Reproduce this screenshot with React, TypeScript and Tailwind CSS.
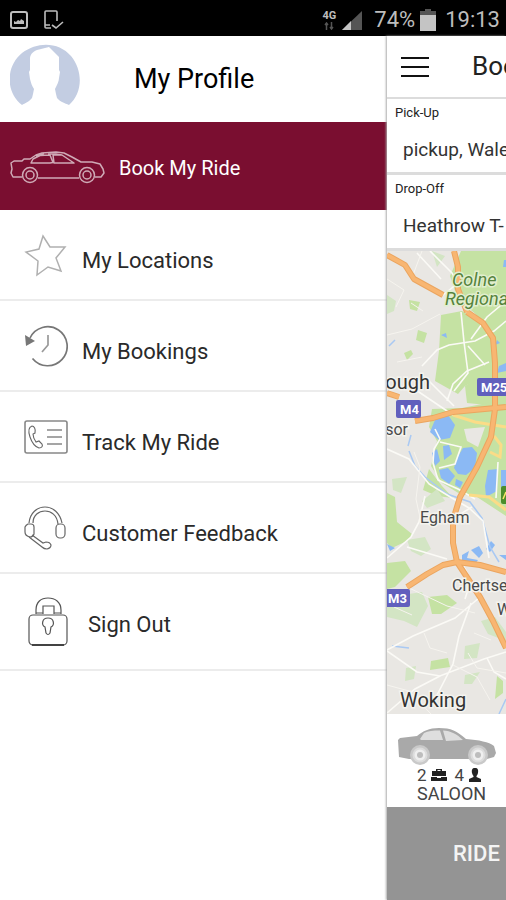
import type { ReactNode } from 'react';

function CarOutlineIcon() {
  return (
    <svg viewBox="0 0 96 34" className="w-24 shrink-0" fill="none" stroke="#cfaab6" strokeWidth="1.5" strokeLinejoin="round" aria-hidden="true">
      <path d="M12 26H3L1 22L2 18L1 12L4 10L12 10L14 8L20 8L26 4L32 2L46 1L54 2L62 6L71 11L82 11L90 13L93 18L94 22L91 26H85M69 27H28" />
      <path d="M21 12L23 8L30 4.500L40 4L43 11.500L40 12ZM43 4L52 4L58 8L64 12H44ZM26 5L34 2.500M52 4L46 3H38" />
      <circle cx="20" cy="24" r="7.500" />
      <circle cx="20" cy="24" r="4" />
      <circle cx="77" cy="24" r="7.500" />
      <circle cx="77" cy="24" r="4" />
    </svg>
  );
}

function SaloonIcon() {
  return (
    <svg viewBox="0 0 100 38" className="w-[100px]" aria-hidden="true">
      <path
        d="M1 13L3 11L20 9C26 4 32 1 42 1C54 1 60 4 69 12C82 13 92 15 97 19L99 26L97 30L90 32H12L2 30Z"
        fill="#a9a9a9"
      />
      <path d="M23 12L27 6C31 4 36 3.500 43 3.500L46 13H24ZM46 3.500C54 4 60 7 66 13L49 14Z" fill="#dedede" />
      {[23, 81].map((cx) => (
        <g key={cx}>
          <circle cx={cx} cy="28" r="10" fill="#c9c9c9" />
          <circle cx={cx} cy="28" r="7.500" fill="#dcdcdc" />
          <circle cx={cx} cy="28" r="5.500" fill="#efefef" />
          <circle cx={cx} cy="28" r="3" fill="#bdbdbd" />
        </g>
      ))}
    </svg>
  );
}

function StarIcon() {
  return (
    <svg viewBox="0 0 44 44" className="w-11" fill="none" stroke="#b0b0b0" strokeWidth="1.5" aria-hidden="true">
      <path d="M19 3L26 14L41 14L32 25L37 38L24 34L13 42L14 28L2 19L15 16Z" />
    </svg>
  );
}

function HistoryIcon() {
  return (
    <svg viewBox="0 0 44 44" className="w-11" fill="none" stroke="#777" strokeWidth="1.7" aria-hidden="true">
      <path d="M6 14A19.500 19.500 0 1 1 8.500 34.500" />
      <path d="M24 11V21L18 28" stroke="#999" />
      <path d="M1 11L11 17L2 22Z" fill="#777" stroke="none" />
    </svg>
  );
}

function ContactCardIcon() {
  return (
    <svg viewBox="0 0 44 44" className="w-11" fill="none" stroke="#888" strokeWidth="1.6" aria-hidden="true">
      <rect x="1" y="6" width="42" height="32" rx="2" />
      <path d="M8 11C5 12 4 16 6 22C8 28 12 32 15 33C18 33 19 31 18 29L15 26L12 27C10 24 9 21 9 19L11 18C12 14 10 11 8 11Z" stroke="#666" strokeWidth="1.1" />
      <path d="M23 15H38M23 22H38M23 29H38" strokeWidth="1.5" />
    </svg>
  );
}

function HeadsetIcon() {
  return (
    <svg viewBox="0 0 44 44" className="w-11" fill="none" stroke="#666" strokeWidth="1.2" aria-hidden="true">
      <path d="M5 17C6 7 13 1 21 1S36 7 38 17M9 17C9 9 15 5 21 5S33 9 34 18" />
      <path d="M4 18H7Q10 18 10 21V28Q9 31 6 31Q1 30 1 26V21Q2 19 4 18Z" />
      <rect x="32" y="18" width="9" height="14" rx="4" />
      <path d="M5 31L18 41Q20 43 23 43Q27 42 27 39Q26 36 22 36L19 37L8 29" />
    </svg>
  );
}

function PadlockIcon() {
  return (
    <svg viewBox="0 0 40 50" className="h-[50px] w-10" fill="none" stroke="#555" strokeWidth="1.2" aria-hidden="true">
      <rect x="1" y="18" width="38" height="30" rx="4" />
      <path d="M8 17V13C8 5 13 1 20 1S33 5 33 13V17M15 17V9H26V17M8 16H15M26 16H33" />
      <path d="M17 30C13 28 14 21 20 21S27 28 23 30L22 36Q20 39 18 36Z" />
      <path d="M4 48H36" stroke="#222" strokeWidth="1.5" />
    </svg>
  );
}

function StatusBar() {
  return (
    <div className="flex h-9 items-center justify-between bg-black pl-[10px] pr-[6px] pt-[3px] text-[#bdbdbd]">
      <div className="flex items-center gap-4">
        <svg viewBox="0 0 18 18" className="w-[18px]" fill="none" stroke="currentColor" strokeWidth="2" aria-hidden="true">
          <rect x="1" y="1" width="16" height="16" rx="2" />
          <path d="M4 13V10L6 11L8 9L10 10L11 8L14 10V13Z" fill="currentColor" stroke="none" />
        </svg>
        <svg viewBox="0 0 20 20" className="w-5" fill="none" stroke="currentColor" strokeWidth="1.6" aria-hidden="true">
          <path d="M13 11V2Q13 1 12 1H2Q1 1 1 2V17Q1 18 2 18H7M1 15H6M8 15L12 18L19 12" />
        </svg>
      </div>
      <div className="flex items-center">
        <div className="flex flex-col items-center">
          <span className="text-[11px] font-bold leading-[12px]">4G</span>
          <svg viewBox="0 0 10 8" className="w-[10px]" fill="none" stroke="#555" strokeWidth="1.5" aria-hidden="true">
            <path d="M2.500 8V1M1 3L2.500 1L4 3M7.500 0V7M6 5L7.500 7L9 5" />
          </svg>
        </div>
        <svg viewBox="0 0 20 20" className="ml-[6px] w-5" aria-hidden="true">
          <path d="M0 20L20 1V20Z" fill="#555" />
          <path d="M0 20L9 11V20Z" fill="#c4c4c4" />
        </svg>
        <span className="ml-3 text-[22px] leading-8">74%</span>
        <svg viewBox="0 0 16 22" className="ml-[5px] w-4" aria-hidden="true">
          <path d="M5 0H11V2H16V7H0V2H5Z" fill="#555" />
          <path d="M0 6H16V22H0Z" fill="#c4c4c4" />
        </svg>
        <span className="ml-[9px] text-[22px] leading-8">19:13</span>
      </div>
    </div>
  );
}

type MenuItemProps = { icon: ReactNode; label: string };

function MenuItem({ icon, label }: MenuItemProps) {
  return (
    <li>
      <button className="flex h-[91px] w-full items-center gap-[14px] border-b-2 border-[#ececec] pl-6 text-left text-[22px] text-[#2a2a2a]">
        <span className="w-11">{icon}</span>
        <span className="pt-3">{label}</span>
      </button>
    </li>
  );
}

const menuItems: MenuItemProps[] = [
  { icon: <StarIcon />, label: 'My Locations' },
  { icon: <HistoryIcon />, label: 'My Bookings' },
  { icon: <ContactCardIcon />, label: 'Track My Ride' },
  { icon: <HeadsetIcon />, label: 'Customer Feedback' },
];

function Drawer() {
  return (
    <nav className="min-w-0 flex-1 bg-white">
      <div className="flex h-[86px] items-center pl-[10px]">
        <svg viewBox="0 0 70 70" className="w-[70px]" aria-hidden="true">
          <path
            d="M12 61C-5 48 -4 22 12 9C28 -3 49 -2 61 12C74 28 72 50 59 61C55 59 50 58 47 54L46 50L45 45C47 41 49 37 49 34L50 28L49 26L49 13L41 5L39 3L27 6C22 8 20 11 20 15V26L19 28L20 35C21 39 22 42 24 45L23 50L22 54C19 58 15 59 12 61Z"
            fill="#c3cde2"
          />
        </svg>
        <h1 className="ml-[54px] text-[27px] text-black">My Profile</h1>
      </div>
      <button className="flex h-[88px] w-full items-center gap-[13px] bg-[#7a0e30] pl-[10px] pt-1 text-left text-xl text-white">
        <CarOutlineIcon />
        Book My Ride
      </button>
      <ul>
        {menuItems.map((item) => (
          <MenuItem key={item.label} {...item} />
        ))}
        <li>
          <button className="flex h-[97px] w-full items-center gap-5 border-b-2 border-[#ececec] pl-[28px] text-left text-[22px] text-[#2a2a2a]">
            <PadlockIcon />
            <span className="pt-[6px]">Sign Out</span>
          </button>
        </li>
      </ul>
    </nav>
  );
}

function RoadBadge({ x, y, width, label }: { x: number; y: number; width: number; label: string }) {
  return (
    <g>
      <rect x={x} y={y} width={width} height="18" rx="2" fill="#615fbd" />
      <text x={x + 4} y={y + 14} fontSize="13" fontWeight="700" fill="#fff">
        {label}
      </text>
    </g>
  );
}

function RouteMap() {
  return (
    <svg
      viewBox="0 0 119 463"
      preserveAspectRatio="xMinYMin slice"
      className="min-h-[463px] w-full flex-1 bg-[#e9e7e3]"
      aria-label="Map"
    >
      {/* Parks and woodland */}
      <g fill="#c5e2a3">
        <path d="M74 0H119V75L103 70L85 60L70 46L63 25Z" />
        <path d="M54 64L75 60L105 78L108 100L104 121L78 135L71 143L48 130L52 100Z" />
        <path d="M82 56L119 66V156L80 152L78 135L104 118V80Z" />
        <path d="M45 158L75 157L110 150L119 155V265L90 246L73 243L55 232L44 215L50 190L42 176Z" />
        <path d="M22 49L33 51L30 60L23 58ZM31 79L40 82L37 92L29 89ZM17 102L24 99L26 103L20 109Z" />
        <path d="M0 242L8 246L10 271L25 283L22 289L5 297L0 292ZM42 218L55 235L66 247L50 245L36 239Z" />
        <path d="M41 346L60 344L70 352L54 363H45ZM0 312L18 310L24 320L8 336L0 338Z" />
        <path d="M44 410L61 407L63 416L43 419ZM110 425L116 430V442L108 448Z" />
      </g>
      <path d="M77 178L98 176L91 196L80 190Z" fill="#e9e7e3" />
      <g fill="#d3e5c4">
        <path d="M0 338L15 344L35 341L41 355L30 376L17 370L0 366Z" />
        <path d="M0 44L9 50L7 60L0 63ZM5 228L20 226L14 242L6 239ZM20 289L38 286L44 298L34 305L24 300Z" />
        <path d="M78 395L93 392L90 407L77 408ZM35 250L50 238L58 250L40 257ZM19 417L29 415L27 428L18 430Z" />
        <path d="M78 424L93 421L85 433H77ZM94 370L108 366L119 381V390L101 383ZM45 0L58 5L50 16Z" />
      </g>
      {/* Lakes and rivers */}
      <g fill="#8bb9f4">
        <path d="M48 169L61 164L68 174L63 187L52 189L43 181Z" />
        <path d="M76 197L85 196L90 202L88 217L79 224L71 223L67 217L70 207Z" />
        <path d="M45 202L50 198L53 210L48 215ZM56 195L62 194L65 203L57 209ZM52 219L61 217L68 225L62 233L54 227ZM69 228L76 231L73 237L68 234Z" />
        <path d="M101 219L111 218L110 240L99 246L98 235ZM114 219H119V242H114Z" />
        <path d="M75 304L82 300L80 307L91 309L88 313L75 310ZM84 299L92 295L96 302L92 307ZM99 298L104 290L108 294L103 301ZM112 304H119V309ZM0 293L8 297L3 300ZM112 115L119 112V120L110 122ZM117 9H119V16H116ZM54 84L59 82L60 87ZM110 89L113 92L108 94Z" />
      </g>
      <g fill="none" stroke="#a9c9f3" strokeWidth="1.5">
        <path d="M21 195L24 184M22 200L28 215L38 226L60 243L83 251L95 267L103 296L112 311M2 95L8 89M5 395L22 397M112 463L119 448" />
      </g>
      {/* Local roads */}
      <g fill="none" stroke="#fbfaf6" strokeWidth="1.6">
        <path d="M0 198L22 208L42 233L65 247L82 257L96 270L102 307" />
        <path d="M48 178L53 188L47 198L46 212L51 229L71 238L88 248M53 191L74 196L68 213L52 217" />
        <path d="M30 2L43 16L54 28M43 0L65 22L71 32L56 44" />
        <path d="M35 115L50 99L62 94L88 90L107 80L119 70" />
        <path d="M26 137L66 164M67 155L42 130M74 61L77 91L81 122L67 140M81 95L98 114" />
        <path d="M84 88L100 66L119 50M60 150L66 133L80 120L102 111" />
        <path d="M0 399L26 385L68 367L92 347M84 352L72 385L66 413L48 448M0 400L30 421L53 425L97 408L119 401" />
        <path d="M0 307L24 286L32 271L38 245M0 462L28 438L53 425M100 407L107 421L119 428M20 296L60 308" />
        <path d="M111 211L109 247M62 270L85 256M75 312L84 329L78 348" />
      </g>
      <g fill="none" stroke="#f6f4ef" strokeWidth="1">
        <path d="M0 84L25 78L53 63M35 0L26 24M0 28L17 39L9 56M0 434L22 440L44 463M66 414L90 426L103 449M20 336L60 355L88 362" />
        <path d="M27 201L33 216L29 248L34 271M7 356L25 364M37 382L43 397L60 402M87 382L104 389M24 52L36 60M10 111L35 106M81 402L90 417L119 422" />
      </g>
      {/* A roads */}
      <g fill="none" stroke="#fbdc87" strokeWidth="3">
        <path d="M66 164L88 171L119 176M82 244L102 246L119 259M107 185L114 194L113 206L103 201" />
      </g>
      {/* Motorways */}
      <g fill="none" strokeLinejoin="round">
        <g stroke="#eba55f" strokeWidth="6">
          <path d="M0 4L18 14L27 28L56 44M80 61L96 72L106 87L108 112L108 158L104 186L90 216L73 246L66 269L66 292L70 311L93 346L106 370L119 397" />
          <path d="M67 0L71 16L71 38L80 61M0 142L12 146M28 170L46 167L66 161L119 156M20 336L40 323L56 314L70 311L93 314L119 321" />
        </g>
        <g stroke="#f8b672" strokeWidth="4">
          <path d="M0 4L18 14L27 28L56 44M80 61L96 72L106 87L108 112L108 158L104 186L90 216L73 246L66 269L66 292L70 311L93 346L106 370L119 397" />
          <path d="M67 0L71 16L71 38L80 61M0 142L12 146M28 170L46 167L66 161L119 156M20 336L40 323L56 314L70 311L93 314L119 321" />
        </g>
      </g>
      {/* Labels */}
      <g stroke="#f4f3ee" strokeWidth="3" paintOrder="stroke" fill="#4a4a4a">
        <g fontSize="18" fontStyle="italic" fill="#55823c" stroke="#e1efcf">
          <text x="65" y="35">Colne</text>
          <text x="58" y="54">Regiona</text>
        </g>
        <text x="43" y="138" fontSize="20" textAnchor="end" fill="#333">ough</text>
        <text x="21" y="184" fontSize="16" textAnchor="end">sor</text>
        <text x="33" y="272" fontSize="16">Egham</text>
        <text x="65" y="340" fontSize="16">Chertsey</text>
        <text x="110" y="364" fontSize="16">W</text>
        <text x="13" y="456" fontSize="20" fill="#333">Woking</text>
      </g>
      <RoadBadge x={90} y={127} width={35} label="M25" />
      <RoadBadge x={9} y={149} width={25} label="M4" />
      <RoadBadge x={-3} y={338} width={26} label="M3" />
      <rect x="114" y="235" width="12" height="18" rx="2" fill="#4b8d2b" />
      <path d="M119 241L116 248" stroke="#fbe66b" strokeWidth="1.5" />
    </svg>
  );
}

function AddressField({ id, label, value }: { id: string; label: string; value: string }) {
  return (
    <div className="h-[76px] border-b-[3px] border-[#dcdcdc] bg-white pl-2 pt-1">
      <label htmlFor={id} className="block text-[13px] leading-5 text-[#222]">
        {label}
      </label>
      <input
        id={id}
        defaultValue={value}
        className="mt-[13px] block h-7 w-full bg-transparent pl-2 text-[19px] text-[#333] outline-none"
      />
    </div>
  );
}

function BookingPane() {
  return (
    <main className="flex w-[119px] shrink-0 flex-col overflow-hidden bg-white shadow-[-1px_0_2px_#aaa]">
      <header className="flex h-[63px] items-center border-b-2 border-[#dcdcdc] pl-[14px]">
        <button aria-label="Menu" className="shrink-0">
          <svg viewBox="0 0 28 20" className="w-7" stroke="#111" strokeWidth="2" aria-hidden="true">
            <path d="M0 1H28M0 10H28M0 19H28" />
          </svg>
        </button>
        <h2 className="ml-[43px] text-[26px] text-[#222]">Boo</h2>
      </header>
      <AddressField id="pickup" label="Pick-Up" value="pickup, Wales" />
      <AddressField id="dropoff" label="Drop-Off" value="Heathrow T-" />
      <RouteMap />
      <button className="flex h-[93px] flex-col items-start pl-[10px] pt-[13px] text-[#444]">
        <SaloonIcon />
        <span className="flex items-center gap-1 pl-5 text-[17px] leading-5">
          2
          <svg viewBox="0 0 16 14" className="w-4" fill="#222" aria-hidden="true">
            <path d="M5 3V1H11V3H15V8H1V3ZM6.500 3H9.500V2H6.500ZM0 9H6V10H10V9H16V13H0Z" />
          </svg>
          <span className="ml-1">4</span>
          <svg viewBox="0 0 14 14" className="w-[14px]" fill="#222" aria-hidden="true">
            <path d="M7 0C10 0 10.500 2 10 5Q9.500 7 8.500 8V9L13 11V14H1V11L5.500 9V8Q4.500 7 4 5C3.500 2 4 0 7 0Z" />
          </svg>
        </span>
        <span className="pl-5 text-[18px] leading-[18px]">SALOON</span>
      </button>
      <button className="h-[93px] bg-[#949494] pl-[66px] text-left text-[22px] font-medium text-[#f4f4f4]">
        RIDE
      </button>
    </main>
  );
}

export default function App() {
  return (
    <div className="flex min-h-screen flex-col bg-white font-[Roboto,sans-serif]">
      <StatusBar />
      <div className="flex flex-1">
        <Drawer />
        <BookingPane />
      </div>
    </div>
  );
}
